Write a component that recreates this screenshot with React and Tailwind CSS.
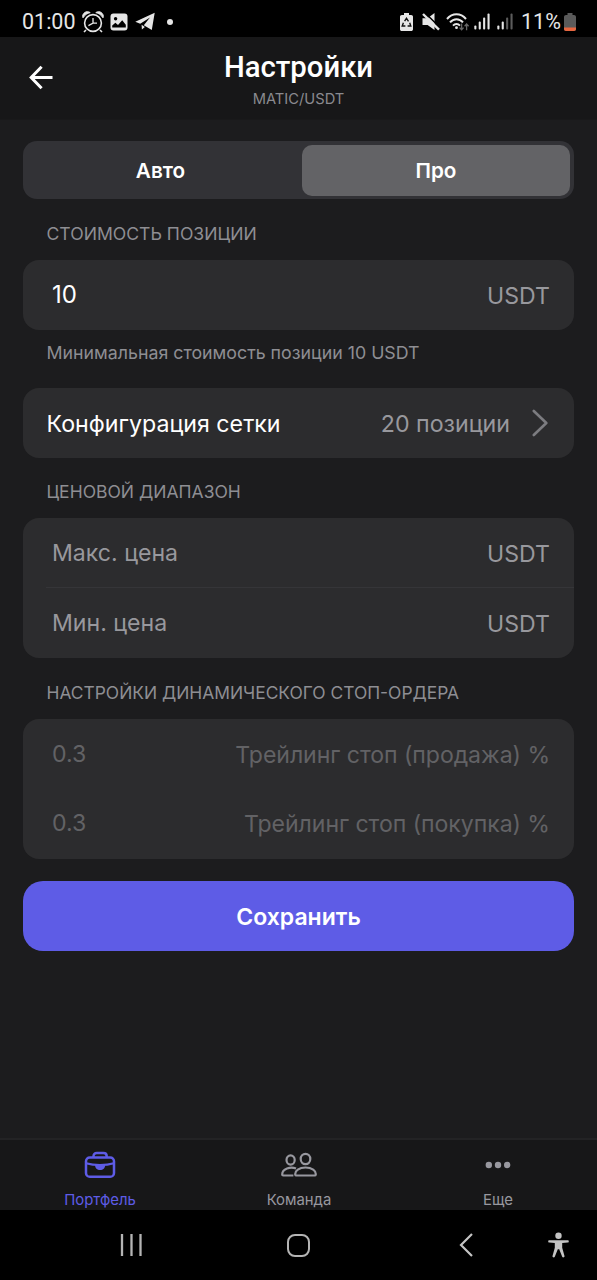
import { useState } from "react";

// --- status bar icons ---

const AlarmIcon = () => (
  <svg width="22" height="22" viewBox="0 0 22 22" fill="none" stroke="#e6e6e6">
    <circle cx="11" cy="12" r="8.4" strokeWidth="1.6" />
    <path d="M11 7v5.6M15 12.2h-4l-4.6 2.4" strokeWidth="1.3" />
    <path d="M1 6.8C-.6 2.4 4.6-1 8.2 1.6 5.2 2.2 2.8 4 1 6.8zM21 6.8C22.6 2.4 17.4-1 13.8 1.6c3 .6 5.4 2.4 7.2 5.2z" fill="#e6e6e6" />
    <path d="M4 19l-2 2M18 19l2 2" strokeWidth="1.6" />
  </svg>
);

const PictureIcon = () => (
  <svg width="18" height="18" viewBox="0 0 18 18">
    <rect x="0.5" y="0.5" width="17" height="17" rx="3" fill="#e6e6e6" />
    <circle cx="5.6" cy="5.8" r="1.7" fill="#000" />
    <path d="M2.2 14.5v-2l3.2-2.7 2.6 2.2 4.2-4.8 3.6 4.6v2.7z" fill="#000" />
  </svg>
);

const TelegramIcon = () => (
  <svg width="20" height="19" viewBox="0 0 20 19" fill="#e6e6e6">
    <path d="M.3 9.8 19.7.8 16.8 18 8.800 13.200 15 5.600 5.200 11.800zM6.600 12.800l3.300 2.200-3 2.600z" />
  </svg>
);

const RecycleBattery = () => (
  <svg width="13" height="18" viewBox="0 0 13 18">
    <path d="M4 0h5v2h2.2c1 0 1.8.8 1.8 1.8v12.4c0 1-.8 1.8-1.8 1.8H1.8C.8 18 0 17.2 0 16.2V3.8C0 2.8.8 2 1.8 2H4z" fill="#e6e6e6" />
    <path d="M4.6 8.2 6.5 5.3l2 3M9.7 9.8l1.1 3.2H7.6M5.4 13H2.2l1.2-3.2" fill="none" stroke="#111" strokeWidth="1.4" />
  </svg>
);

const MuteIcon = () => (
  <svg width="18" height="18" viewBox="0 0 18 18">
    <path d="M.5 5.3H5.6L12.500 0v17L5.600 12H.5z" fill="#e6e6e6" />
    <path d="M2.600-.6 18.400 15" stroke="#000" strokeWidth="1.500" />
    <path d="M1 1 17 16.600" stroke="#e6e6e6" strokeWidth="2.400" />
  </svg>
);

const WifiIcon = () => (
  <svg width="24" height="18" viewBox="0 0 24 18" fill="none" stroke="#e6e6e6" strokeWidth="2">
    <path d="M1 6c5.400-6.300 13.600-6.300 19 0M4 9.400c3.700-4.300 9.300-4.300 13 0M7 12.600c2.100-2.300 4.900-2.300 7 0" />
    <circle cx="10.5" cy="14.7" r="1.4" fill="#e6e6e6" stroke="none" />
    <path d="M15.600 10.500v6M13.600 14.600l2 2.200 2-2.200M20.600 17.300v-6M18.600 13.200l2-2.200 2 2.200" stroke="#666" strokeWidth="1.3" />
  </svg>
);

function SignalIcon({ level }) {
  const heights = [4, 8, 12, 16];
  return (
    <svg width="16" height="17" viewBox="0 0 16 17">
      {heights.map((h, i) => (
        <rect
          key={h}
          x={i * 4.4 + 0.3}
          y={16.5 - h}
          width="2.1"
          height={h}
          rx="0.9"
          fill={i < level ? "#e6e6e6" : "#5c5c5c"}
        />
      ))}
    </svg>
  );
}

const BatteryIcon = () => (
  <svg width="12" height="18" viewBox="0 0 12 18">
    <path d="M3.5 0h5v2H10c1.100 0 2 .9 2 2v12c0 1.100-.9 2-2 2H2c-1.100 0-2-.9-2-2V4c0-1.100.9-2 2-2h1.500z" fill="#5a5a5a" />
    <path d="M0 14.500h12V16c0 1.100-.9 2-2 2H2c-1.100 0-2-.9-2-2z" fill="#e8663f" />
  </svg>
);

// --- tab bar icons ---

const BriefcaseIcon = () => (
  <svg width="32" height="28" viewBox="0 0 32 28" fill="none" stroke="#5e5ce6" strokeWidth="2.5">
    <rect x="2" y="6.5" width="28" height="19.2" rx="3.8" />
    <path d="M9.500 6.500V5.200c0-1.900 1.300-3.200 3.200-3.200h6.800c1.900 0 3.200 1.300 3.200 3.200v1.300" />
    <path d="M2 12.200c4.300 1.200 8.500 1.800 14 1.800s9.700-.6 14-1.800" strokeWidth="2.2" />
    <path d="M11 14h10.200c0 3-2.200 5-5.100 5S11 17 11 14z" fill="#5e5ce6" stroke="none" />
  </svg>
);

const TeamIcon = () => (
  <svg width="36" height="26" viewBox="0 0 36 26" fill="none" stroke="#98989f" strokeWidth="2.2">
    <ellipse cx="24.5" cy="7" rx="4.8" ry="5.2" />
    <ellipse cx="9.6" cy="8" rx="4.1" ry="4.6" />
    <path d="M14.300 22.800c-.7-4 4-7.300 10.200-7.300s10.900 3.300 10.200 7.300c-.1.500-.4.700-.9.700H15.200c-.5 0-.8-.2-.9-.7z" />
    <path d="M15 16.600C9.400 14.200 1.200 17 1.200 22.500c0 .7.300 1 1 1h10.200" />
  </svg>
);

const MoreIcon = () => (
  <svg width="26" height="8" viewBox="0 0 26 8" fill="#98989f">
    <circle cx="3.8" cy="4" r="3.2" />
    <circle cx="13" cy="4" r="3.2" />
    <circle cx="22.2" cy="4" r="3.2" />
  </svg>
);

function StatusBar() {
  return (
    <div className="h-[37px] bg-black text-[#e6e6e6] flex items-center pl-[22px] pr-[21px] pt-[6px] font-['Roboto',sans-serif] text-[21.5px] leading-none">
      <span className="w-[60px] whitespace-nowrap">01:00</span>
      <AlarmIcon />
      <span className="ml-[6px]"><PictureIcon /></span>
      <span className="ml-[7px]"><TelegramIcon /></span>
      <span className="ml-[12px] size-[6px] rounded-full bg-[#e6e6e6]" />
      <div className="ml-auto flex items-center">
        <RecycleBattery />
        <span className="ml-[9px]"><MuteIcon /></span>
        <span className="ml-[6px]"><WifiIcon /></span>
        <span className="ml-[4px]"><SignalIcon level={4} /></span>
        <span className="ml-[7px]"><SignalIcon level={2} /></span>
        <span className="ml-[8px] w-[43px] whitespace-nowrap">11%</span>
        <BatteryIcon />
      </div>
    </div>
  );
}

function Header() {
  return (
    <header className="h-[83px] bg-[#171718] border-b border-[#19191a] grid grid-cols-[80px_1fr_80px]">
      <button className="pl-[29px] pt-[28px] self-start">
        <svg width="24" height="25" viewBox="0 0 24 25" fill="none" stroke="#fff" strokeWidth="3">
          <path d="M12.600 1.800 2.200 12.500l10.400 10.700M2.200 12.500h21.300" />
        </svg>
      </button>
      <div className="flex flex-col items-center pt-[13px]">
        <h1 className="font-['Roboto',sans-serif] font-medium text-[29.3px] leading-[34px] text-white">
          Настройки
        </h1>
        <p className="text-[14.7px] leading-[20px] mt-[5px] text-[#8a8a8f]">MATIC/USDT</p>
      </div>
    </header>
  );
}

const Caption = ({ children, className }) => (
  <h2 className={`pl-[23.5px] leading-[22px] text-[#8e8e93] whitespace-nowrap ${className}`}>
    {children}
  </h2>
);

function Field({ label, suffix, className = "text-[23.1px] text-[#98989d]", labelClass = "" }) {
  return (
    <div className={`h-[70px] flex items-center justify-between pl-[29px] pr-[24px] whitespace-nowrap ${className}`}>
      <span className={labelClass}>{label}</span>
      <span className="mt-[2px]">{suffix}</span>
    </div>
  );
}

export default function App() {
  const [mode, setMode] = useState("pro");

  const modes = [
    { id: "auto", label: "Авто" },
    { id: "pro", label: "Про" },
  ];

  const tabs = [
    { label: "Портфель", icon: <BriefcaseIcon />, active: true },
    { label: "Команда", icon: <TeamIcon /> },
    { label: "Еще", icon: <MoreIcon /> },
  ];

  return (
    <div className="w-full h-[1280px] bg-[#1c1c1e] flex flex-col font-['Inter',sans-serif] overflow-hidden">
      <StatusBar />
      <Header />

      <main className="flex-1 px-[23px] pt-[21px]">
        {/* mode switch */}
        <div className="h-[58px] rounded-[14px] bg-[#323236] pt-[4px] pb-[3px] px-[3px] grid grid-cols-[269px_268px] gap-[7px]">
          {modes.map((m) => (
            <button
              key={m.id}
              onClick={() => setMode(m.id)}
              className={`rounded-[10px] pt-px text-[20.7px] font-semibold text-white ${
                mode === m.id ? "bg-[#636366]" : ""
              }`}
            >
              {m.label}
            </button>
          ))}
        </div>

        <Caption className="mt-[24px] text-[17.6px]">СТОИМОСТЬ ПОЗИЦИИ</Caption>
        <section className="mt-[15px] rounded-[16px] bg-[#2c2c2e]">
          <Field label="10" suffix="USDT" labelClass="text-white text-[24px]" />
        </section>
        <p className="mt-[12px] pl-[23.5px] text-[17.8px] leading-[22px] text-[#8e8e93] whitespace-nowrap">
          Минимальная стоимость позиции 10 USDT
        </p>

        <section className="mt-[24px] h-[70px] rounded-[16px] bg-[#2c2c2e] flex items-center pl-[23.5px] pr-[26px] text-[23.2px]">
          <span className="mt-[2px] text-white whitespace-nowrap">Конфигурация сетки</span>
          <span className="mt-[2px] ml-auto mr-[22px] text-[#98989d] whitespace-nowrap">20 позиции</span>
          <svg width="16" height="28" viewBox="0 0 16 28" fill="none" stroke="#7c7c80" strokeWidth="2.6" strokeLinecap="round" strokeLinejoin="round">
            <path d="M1.800 2l12.500 12L1.800 26" />
          </svg>
        </section>

        <Caption className="mt-[23px] text-[17.5px]">ЦЕНОВОЙ ДИАПАЗОН</Caption>
        <section className="mt-[15px] rounded-[16px] bg-[#2c2c2e]">
          <Field label="Макс. цена" suffix="USDT" />
          <div className="-mt-px ml-[23px] h-px bg-[#353538]" />
          <Field label="Мин. цена" suffix="USDT" />
        </section>

        <Caption className="mt-[24px] text-[17.4px]">НАСТРОЙКИ ДИНАМИЧЕСКОГО СТОП-ОРДЕРА</Caption>
        <section className="mt-[15px] pb-px rounded-[16px] bg-[#2c2c2e]">
          <Field
            label="0.3"
            suffix="Трейлинг стоп (продажа) %"
            className="text-[23.1px] tracking-[-0.06px] text-[#626265] pr-[23px]"
          />
          <div className="-mt-px">
            <Field
              label="0.3"
              suffix="Трейлинг стоп (покупка) %"
              className="text-[23.1px] tracking-[-0.06px] text-[#626265] pr-[23px]"
            />
          </div>
        </section>

        <button className="mt-[22px] w-full h-[70px] pt-[2px] rounded-[20px] bg-[#5e5ce6] text-white text-[23px] font-semibold">
          Сохранить
        </button>
      </main>

      {/* bottom tabs */}
      <nav className="h-[72px] shrink-0 bg-[#171718] border-t-2 border-[#232325] grid grid-cols-3">
        {tabs.map((tab) => (
          <a
            key={tab.label}
            className={`flex flex-col items-center pl-px text-[14.9px] ${
              tab.active ? "text-[#5e5ce6]" : "text-[#98989f]"
            }`}
          >
            <span className="h-[50px] mr-[1px] flex items-center">{tab.icon}</span>
            <span className="leading-[20px]">{tab.label}</span>
          </a>
        ))}
      </nav>

      {/* system navigation */}
      <div className="h-[70px] shrink-0 bg-black flex items-center pl-[120px] pr-[28px]">
        <svg width="23" height="22" viewBox="0 0 23 22" stroke="#b4b4b4" strokeWidth="2.3">
          <path d="M2 0v22M11.500 0v22M20.500 0v22" />
        </svg>
        <span className="ml-[144px] size-[23px] rounded-[8px] border-2 border-[#b4b4b4]" />
        <svg className="ml-[149px]" width="14" height="24" viewBox="0 0 14 24" fill="none" stroke="#c4c4c4" strokeWidth="2.2">
          <path d="M13 1 2 12l11 11" />
        </svg>
        <svg className="ml-auto" width="21" height="26" viewBox="0 0 21 26" fill="#c4c4c4">
          <circle cx="10.5" cy="3.7" r="3.2" />
          <path d="M1.200 8.300h18.600c1.300 0 1.300 2.200 0 2.300l-5.600.5v4.600l2.300 8.400c.3 1.300-1.800 1.900-2.300.6l-3-7.500h-1.400l-3 7.500c-.5 1.300-2.600.7-2.300-.6l2.300-8.400v-4.600l-5.600-.5c-1.300-.1-1.300-2.300 0-2.300z" />
        </svg>
      </div>
    </div>
  );
}
